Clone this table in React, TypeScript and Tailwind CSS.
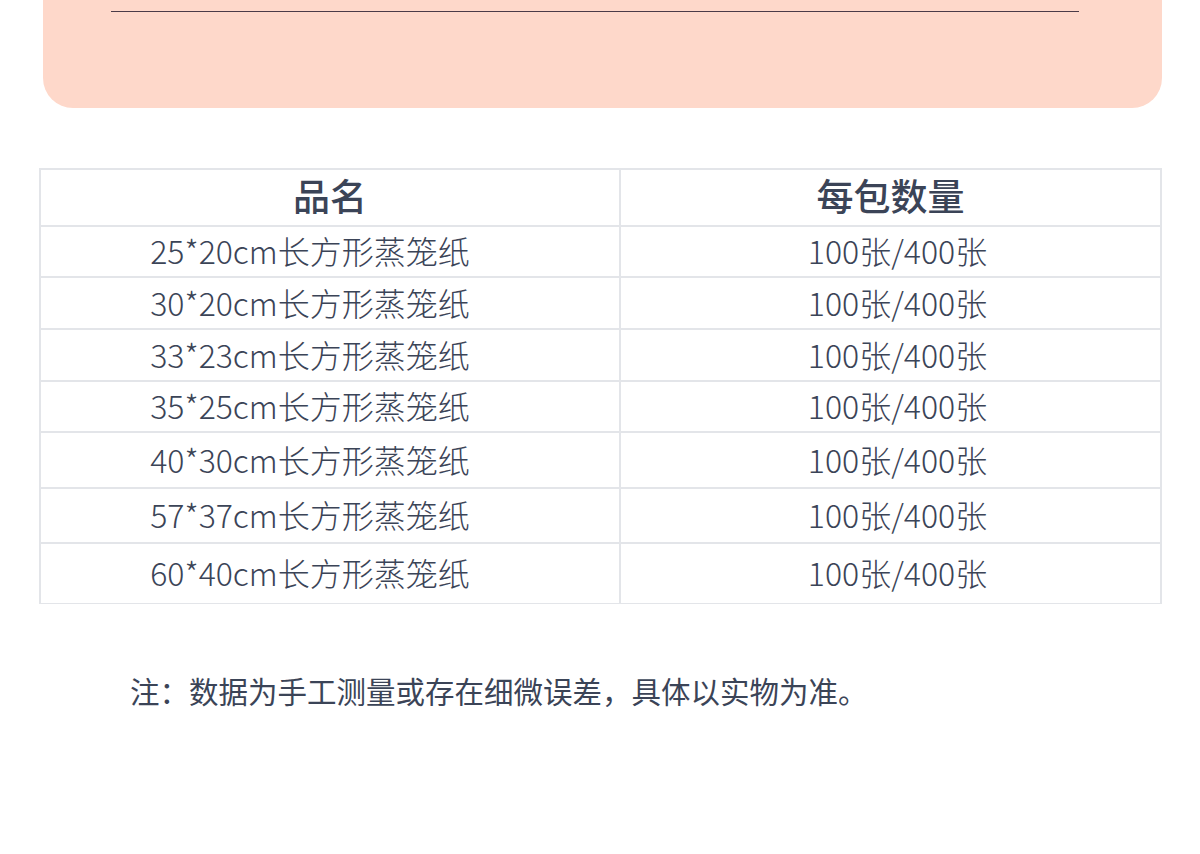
const rows = [
  { name: '25*20cm长方形蒸笼纸', qty: '100张/400张', h: 'h-[51px]' },
  { name: '30*20cm长方形蒸笼纸', qty: '100张/400张', h: 'h-[52px]' },
  { name: '33*23cm长方形蒸笼纸', qty: '100张/400张', h: 'h-[52px]' },
  { name: '35*25cm长方形蒸笼纸', qty: '100张/400张', h: 'h-[51px]' },
  { name: '40*30cm长方形蒸笼纸', qty: '100张/400张', h: 'h-[56px]' },
  { name: '57*37cm长方形蒸笼纸', qty: '100张/400张', h: 'h-[55px]' },
  { name: '60*40cm长方形蒸笼纸', qty: '100张/400张', h: 'h-[59px]' },
];

export default function App() {
  return (
    <div
      className="w-[1200px] h-[854px] bg-white text-[#3b4457] overflow-hidden"
      style={{ fontFamily: '"Noto Sans CJK SC", "Noto Sans", sans-serif' }}
    >
      {/* peach banner, top cut off */}
      <div className="ml-[43px] w-[1119px] h-[108px] bg-[#fed8ca] rounded-b-[30px] pt-[11px] pl-[68px]">
        <div className="w-[968px] h-px bg-[#4b3b48]" />
      </div>

      {/* size table */}
      <div className="mt-[60px] ml-[39px] w-[1123px] border-2 border-[#e3e5e9] border-b-[1px]">
        <div className="flex h-[57px] border-b-2 border-[#e3e5e9]">
          <div className="w-[580px] border-r-2 border-[#e3e5e9] flex items-center justify-center pb-[5px] text-[37px] font-medium leading-none">
            品名
          </div>
          <div className="flex-1 flex items-center justify-center pb-[5px] text-[37px] font-medium leading-none">
            每包数量
          </div>
        </div>
        {rows.map((r, i) => (
          <div
            key={r.name}
            className={`flex ${r.h} ${i < rows.length - 1 ? 'border-b-2 border-[#e3e5e9]' : ''}`}
          >
            <div className="w-[580px] border-r-2 border-[#e3e5e9] flex items-center justify-center pr-[40px] pb-[3px] text-[32px] font-light leading-none">
              {r.name}
            </div>
            <div className="flex-1 flex items-center justify-center pl-[14px] pb-[3px] text-[32px] font-light leading-none">
              {r.qty}
            </div>
          </div>
        ))}
      </div>

      <p className="mt-[72px] ml-[130px] text-[29.5px] leading-none">
        注：数据为手工测量或存在细微误差，具体以实物为准。
      </p>
    </div>
  );
}
